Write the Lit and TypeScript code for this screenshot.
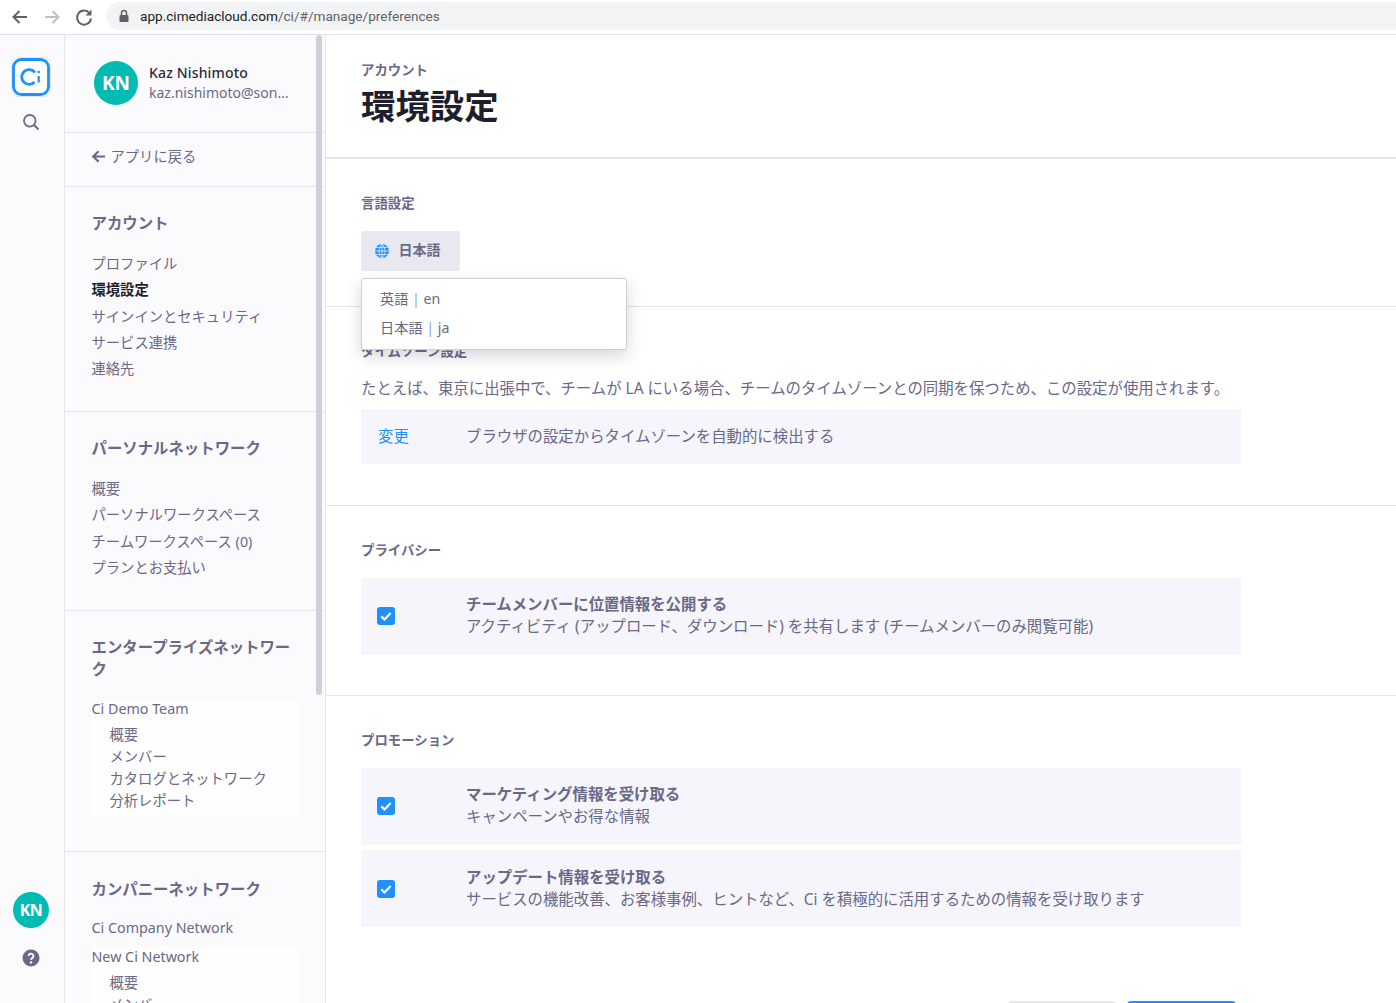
import { LitElement, html, css } from "lit";
import { customElement } from "lit/decorators.js";

const check = html`<span class="cb"><svg viewBox="0 0 18 18" width="18" height="18"><path d="M4.3 9.4l3.2 3.1 6.2-6.6" fill="none" stroke="#fff" stroke-width="2.2"/></svg></span>`;

@customElement("app-root")
export class AppRoot extends LitElement {
  static styles = css`
    :host { display: block; width: 1396px; height: 1003px; overflow: hidden; background: #fff; color: #6b6887;
      font-family: "Noto Sans", "Noto Sans CJK JP", sans-serif; font-size: 14px; }
    * { box-sizing: border-box; }
    .chrome { height: 35px; display: flex; align-items: center; border-bottom: 1px solid #e2e1e8; background: #fff; }
    .chrome svg { display: block; flex: none; }
    .nav { display: flex; align-items: center; gap: 12px; padding-left: 10px; width: 106px; }
    .url { width: 1290px; height: 28px; margin-top: -3px; border-radius: 14px 0 0 14px; background: #f1f3f4; display: flex; align-items: center; padding-left: 12px; gap: 10px; font-family: Roboto, sans-serif; font-size: 13.6px; color: #5f6368; }
    .url b { font-weight: 400; color: #202124; }
    .body { display: flex; height: 968px; }
    .rail { width: 65px; flex: none; background: #fbfbfe; border-right: 1px solid #e6e5ee; display: flex; flex-direction: column; align-items: center; padding: 22px 2px 0 0; }
    .logo { width: 40px; height: 40px; border: 1px solid #e6e5ee; border-radius: 7px; display: flex; align-items: center; justify-content: center; }
    .search { margin-top: 16px; height: 18px; }
    .spacer { flex: 1; }
    .av-s { width: 36px; height: 36px; border-radius: 50%; background: #00bbb4; color: #fff; font-weight: 700; font-size: 16px; display: flex; align-items: center; justify-content: center; letter-spacing: -.5px; }
    .help { margin: 21px 0 36px; height: 18px; }
    .side { width: 261px; flex: none; background: #fbfbfe; border-right: 1px solid #e6e5ee; position: relative; overflow: hidden; font-size: 14.3px; }
    .thumb { position: absolute; top: 0; right: 3px; width: 6px; height: 660px; border-radius: 3px; background: #cfcfdc; }
    .user { height: 98px; border-bottom: 1px solid #e6e5ee; display: flex; align-items: center; padding: 0 0 2px 29px; gap: 11px; }
    .av { width: 44px; height: 44px; border-radius: 50%; background: #00bbb4; color: #fff; font-weight: 700; font-size: 19px; display: flex; align-items: center; justify-content: center; flex: none; }
    .uname { color: #2b2a3a; font-size: 14px; font-weight: 500; line-height: 20px; letter-spacing: .15px; }
    .mail { font-size: 14px; line-height: 20px; width: 141px; overflow: hidden; white-space: nowrap; text-overflow: ellipsis; }
    .back { height: 54px; border-bottom: 1px solid #e6e5ee; display: flex; align-items: center; padding: 0 0 8px 25.5px; gap: 6px; }
    .back svg { margin-top: 2px; }
    .sec { border-bottom: 1px solid #e6e5ee; padding: 26px 26px 0 26.5px; }
    .sec h3 { margin: 0 0 16px; font-size: 15.4px; line-height: 22px; font-weight: 700; color: #6b6887; }
    .item { line-height: 26.25px; white-space: nowrap; }
    .item.on { font-weight: 700; color: #1f1e2c; }
    .group { background: #fefeff; width: 207px; margin: 19px 0 36px -.5px; padding: 0 0 4px .5px; }
    .group .item { line-height: 20px; }
    .group .head { line-height: 18px; padding-bottom: 6px; }
    .group .head.b { line-height: 20px; padding-bottom: 5px; }
    .group .sub { padding-left: 18px; line-height: 22px; }
    .main { flex: 1; position: relative; overflow: hidden; }
    .top { height: 124px; border-bottom: 2px solid #e6e5ee; padding: 25px 35px 0; }
    .crumb { font-size: 13.4px; font-weight: 700; line-height: 20px; }
    h1 { margin: 0; font-size: 34.4px; line-height: 51px; font-weight: 700; color: #1f1e2c; }
    .block { border-bottom: 1px solid #e6e5ee; padding: 35px 35px 0; }
    h4 { margin: 0; font-size: 13.4px; line-height: 18px; font-weight: 700; color: #6b6887; }
    .lang { margin-top: 19px; width: 99px; height: 40px; border-radius: 3px; background: #e8e8f0; display: flex; align-items: center; padding-left: 14px; gap: 10px; font-weight: 700; font-size: 14px; }
    .lang span { margin: 0 0 4px -.5px; }
    .menu { position: absolute; z-index: 2; left: 35px; top: 243px; width: 266px; height: 72px; background: #fff; border: 1px solid #cfcfcf; border-radius: 3px; box-shadow: 0 6px 16px rgba(50,50,70,.2); padding: 5px 18px; line-height: 29px; font-size: 14.2px; }
    .menu i { font-style: normal; color: #8aa9d6; }
    .note { margin: 19px 0 10px; line-height: 20px; font-size: 15.4px; white-space: nowrap; }
    .row { width: 880px; background: #f5f5fb; display: flex; align-items: center; padding-bottom: 2px; font-size: 15.4px; }
    .row .l { width: 105px; flex: none; padding-left: 17px; display: flex; }
    .row .l.c { padding-left: 16px; }
    .cb { width: 18px; height: 18px; border-radius: 3px; background: #1e90ff; display: block; margin-top: 1px; }
    .link { color: #1e90ff; }
    .t { font-weight: 700; line-height: 22px; }
    .d { line-height: 22px; }
    .tall { height: 77px; margin-top: 19px; }
    .tall.next { margin-top: 5px; padding-bottom: 0; }
    .btns { position: absolute; left: 682px; top: 966px; display: flex; gap: 11px; }
    .btn { width: 108px; height: 30px; border-radius: 4px; background: #e6e6ec; }
    .btn.p { width: 109px; background: #1e90ff; }
  `;

  render() {
    return html`
      <div class="chrome">
        <div class="nav">
          <svg width="20" height="20" viewBox="0 0 20 20"><path d="M17 10H4M9.5 4L3.5 10l6 6" fill="none" stroke="#5f6368" stroke-width="2"/></svg>
          <svg width="20" height="20" viewBox="0 0 20 20"><path d="M3 10h13M10.5 4l6 6-6 6" fill="none" stroke="#bdc1c6" stroke-width="2"/></svg>
          <svg width="20" height="20" viewBox="0 0 20 20"><path d="M15.5 6.2A7 7 0 1 0 17 11.5" fill="none" stroke="#5f6368" stroke-width="2"/><path d="M17.5 2.5v6h-6z" fill="#5f6368"/></svg>
        </div>
        <div class="url">
          <svg width="12" height="14" viewBox="0 0 12 14"><path d="M3.5 6V4a2.5 2.5 0 0 1 5 0v2" fill="none" stroke="#5f6368" stroke-width="1.5"/><rect x="1.5" y="6" width="9" height="7" rx="1" fill="#5f6368"/></svg>
          <span><b>app.cimediacloud.com</b>/ci/#/manage/preferences</span>
        </div>
      </div>
      <div class="body">
        <div class="rail">
          <div class="logo">
            <svg width="38" height="38" viewBox="0 0 38 38"><rect x="1.5" y="1.5" width="35" height="35" rx="8" fill="#fff" stroke="#1e90ff" stroke-width="2.8"/><path d="M23 14.5A7.4 7.4 0 1 0 22.5 24" fill="none" stroke="#1e90ff" stroke-width="2.8"/><path d="M26.7 18v6.5" stroke="#1e90ff" stroke-width="2.2"/><circle cx="26.7" cy="14" r="1.3" fill="#1e90ff"/></svg>
          </div>
          <svg class="search" width="18" height="18" viewBox="0 0 18 18"><circle cx="7.8" cy="7.8" r="5.8" fill="none" stroke="#6b6887" stroke-width="1.8"/><path d="M12 12l4.5 4.5" stroke="#6b6887" stroke-width="2"/></svg>
          <div class="spacer"></div>
          <div class="av-s">KN</div>
          <svg class="help" width="18" height="18" viewBox="0 0 18 18"><circle cx="9" cy="9" r="8.5" fill="#6b6887"/><path d="M6.6 7a2.4 2.4 0 1 1 3.6 2.1c-.8.5-1.2.8-1.2 1.7" fill="none" stroke="#fff" stroke-width="1.9"/><circle cx="9" cy="13.4" r="1.2" fill="#fff"/></svg>
        </div>
        <div class="side">
          <div class="thumb"></div>
          <div class="user">
            <div class="av">KN</div>
            <div><div class="uname">Kaz Nishimoto</div><div class="mail">kaz.nishimoto@sony.com</div></div>
          </div>
          <div class="back">
            <svg width="14" height="13" viewBox="0 0 14 13"><path d="M14 6.5H3M7.6 1.2L2.2 6.5l5.4 5.3" fill="none" stroke="#6b6887" stroke-width="2.2"/></svg>
            <span>アプリに戻る</span>
          </div>
          <div class="sec" style="height:225px">
            <h3>アカウント</h3>
            <div class="item">プロファイル</div><div class="item on">環境設定</div><div class="item">サインインとセキュリティ</div><div class="item">サービス連携</div><div class="item">連絡先</div>
          </div>
          <div class="sec" style="height:199px">
            <h3>パーソナルネットワーク</h3>
            <div class="item">概要</div><div class="item">パーソナルワークスペース</div><div class="item">チームワークスペース (0)</div><div class="item">プランとお支払い</div>
          </div>
          <div class="sec" style="height:241px">
            <h3 style="margin-bottom:13px">エンタープライズネットワーク</h3>
            <div class="group">
              <div class="item head">Ci Demo Team</div>
              <div class="item sub">概要</div><div class="item sub">メンバー</div><div class="item sub">カタログとネットワーク</div><div class="item sub">分析レポート</div>
            </div>
          </div>
          <div class="sec" style="border:0;padding-top:27px">
            <h3 style="margin-bottom:14px">カンパニーネットワーク</h3>
            <div class="item" style="margin-bottom:-13px">Ci Company Network</div>
            <div class="group">
              <div class="item head b">New Ci Network</div>
              <div class="item sub">概要</div><div class="item sub">メンバー</div>
            </div>
          </div>
        </div>
        <div class="main">
          <div class="top">
            <div class="crumb">アカウント</div>
            <h1>環境設定</h1>
          </div>
          <div class="block" style="height:148px">
            <h4>言語設定</h4>
            <div class="lang">
              <svg width="14" height="14" viewBox="0 0 14 14"><circle cx="7" cy="7" r="7" fill="#1e90ff"/><path d="M0 7h14M1 3.5h12M1 10.5h12M7 0v14M7 0C3 3 3 11 7 14M7 0c4 3 4 11 0 14" fill="none" stroke="#e8e8f0" stroke-width=".8"/></svg>
              <span>日本語</span>
            </div>
          </div>
          <div class="menu"><div>英語 <i>|</i> en</div><div>日本語 <i>|</i> ja</div></div>
          <div class="block" style="height:199px">
            <h4>タイムゾーン設定</h4>
            <div class="note">たとえば、東京に出張中で、チームが LA にいる場合、チームのタイムゾーンとの同期を保つため、この設定が使用されます。</div>
            <div class="row" style="height:55px"><div class="l"><span class="link">変更</span></div><div>ブラウザの設定からタイムゾーンを自動的に検出する</div></div>
          </div>
          <div class="block" style="height:190px">
            <h4>プライバシー</h4>
            <div class="row tall"><div class="l c">${check}</div><div><div class="t">チームメンバーに位置情報を公開する</div><div class="d">アクティビティ (アップロード、ダウンロード) を共有します (チームメンバーのみ閲覧可能)</div></div></div>
          </div>
          <div class="block" style="border:0">
            <h4>プロモーション</h4>
            <div class="row tall"><div class="l c">${check}</div><div><div class="t">マーケティング情報を受け取る</div><div class="d">キャンペーンやお得な情報</div></div></div>
            <div class="row tall next"><div class="l c">${check}</div><div><div class="t">アップデート情報を受け取る</div><div class="d">サービスの機能改善、お客様事例、ヒントなど、Ci を積極的に活用するための情報を受け取ります</div></div></div>
          </div>
          <div class="btns"><div class="btn"></div><div class="btn p"></div></div>
        </div>
      </div>
    `;
  }
}
